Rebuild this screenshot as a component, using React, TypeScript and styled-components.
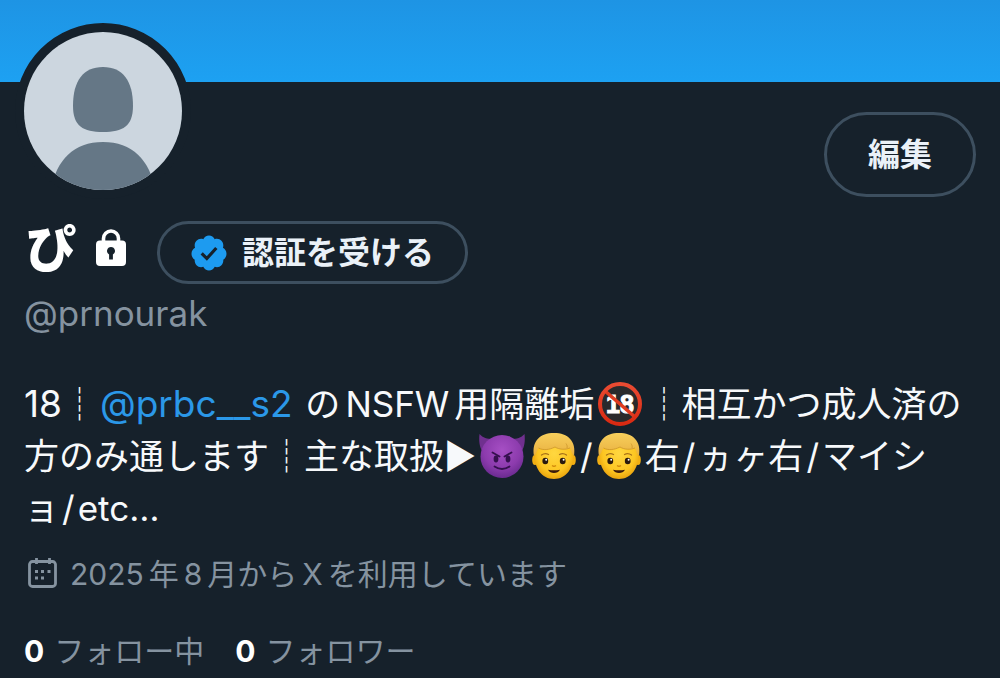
import React from "react";
import styled, { createGlobalStyle } from "styled-components";

const GlobalStyle = createGlobalStyle`
  * { box-sizing: border-box; }
  body {
    margin: 0;
    background: #16212b;
    color: #f7f9fb;
    font-family: Inter, "Noto Sans CJK JP", sans-serif;
  }
`;

const surface = "#16212b";
const muted = "#8593a0";
const accent = "#2b98e8";

const Banner = styled.div`
  height: 82px;
  background: linear-gradient(#1e94e4, #1da1f2);
`;

const Profile = styled.main`
  padding: 0 24px 6px;
`;

const TopRow = styled.div`
  display: flex;
  justify-content: space-between;
  align-items: flex-start;
`;

const Avatar = styled.div`
  width: 176px;
  height: 176px;
  margin: -59px 0 0 -9px;
  border: 9px solid ${surface};
  border-radius: 50%;
  background: ${surface};
  svg { display: block; }
`;

const PillButton = styled.button<{ $tall?: boolean }>`
  display: flex;
  align-items: center;
  gap: 15px;
  height: ${(p) => (p.$tall ? 85 : 63)}px;
  margin-top: ${(p) => (p.$tall ? 30 : 0)}px;
  padding: 0 ${(p) => (p.$tall ? 41 : 31)}px;
  border: 3px solid #3d4f5f;
  border-radius: 44px;
  background: transparent;
  color: #eaf1f8;
  font: 700 32px/40px Inter, "Noto Sans CJK JP", sans-serif;
  cursor: pointer;
`;

const NameRow = styled.div`
  display: flex;
  align-items: center;
  height: 63px;
  margin-top: 22px;
`;

const Name = styled.h1`
  margin: 0 19px 8px 2px;
  font-size: 50px;
  line-height: 54px;
  font-weight: 900;
  color: #fff;
`;

const LockIcon = styled.svg`
  margin: 0 30px 10px 0;
`;

const Handle = styled.p`
  margin: 4px 0 0;
  font-size: 35px;
  line-height: 50px;
  color: ${muted};
`;

const Bio = styled.p`
  margin: 40px 0 0;
  font-size: 35px;
  line-height: 52px;
`;

const BioLine = styled.span`
  display: flex;
  height: 52px;
  align-items: center;
  white-space: pre;
`;

const Mention = styled.a`
  margin: 0 3px;
  font-size: 37px;
  color: ${accent};
  text-decoration: none;
`;

const Age = styled.span`
  font-size: 37px;
`;

const Emoji = styled.svg`
  flex: none;
  width: 46px;
  height: 46px;
  margin: 0 3px;
`;

const Latin = styled.span`
  margin: 0 5px;
`;

const Slash = styled.span`
  margin: 0 3px;
`;

const Joined = styled.p`
  display: flex;
  align-items: center;
  gap: 7px;
  margin: 20px 0 0;
  padding-left: 4px;
  font-size: 30px;
  line-height: 40px;
  color: ${muted};
`;

const Stats = styled.div`
  display: flex;
  gap: 31px;
  margin-top: 37px;
`;

const Stat = styled.a`
  display: flex;
  gap: 10px;
  font-size: 30px;
  line-height: 40px;
  color: ${muted};
  text-decoration: none;
  b { color: #fff; }
`;

const NoMinors = () => (
  <Emoji viewBox="0 0 46 46" role="img" aria-label="18禁">
    <defs>
      <linearGradient id="ring" x1="0" y1="0" x2="0" y2="1">
        <stop offset="0" stopColor="#ea4b32" />
        <stop offset="1" stopColor="#d92a12" />
      </linearGradient>
    </defs>
    <circle cx="23" cy="23" r="19" fill="#2a2a2c" />
    <text x="23" y="32" textAnchor="middle" fontSize="25" fontWeight="700" fontFamily="Liberation Sans, sans-serif" fill="#fff" stroke="#fff" strokeWidth="1">18</text>
    <path d="M8 10 38 36" stroke="#df3b20" strokeWidth="3.6" />
    <circle cx="23" cy="23" r="20" fill="none" stroke="url(#ring)" strokeWidth="4" />
  </Emoji>
);

const Devil = () => (
  <Emoji viewBox="0 0 46 46" role="img" aria-label="悪魔">
    <defs>
      <radialGradient id="devil" cx=".5" cy=".35" r=".65">
        <stop offset="0" stopColor="#a64fc4" />
        <stop offset=".65" stopColor="#8c3bad" />
        <stop offset="1" stopColor="#6b2b90" />
      </radialGradient>
    </defs>
    <path d="M.5 1C-.5 9 1 17 5 20L14 6C8 6 4 5 .5 1ZM45.500 1C46.500 9 45 17 41 20L32 6C38 6 42 5 45.500 1Z" fill="#70308f" />
    <circle cx="23" cy="23.500" r="21.500" fill="url(#devil)" />
    <path d="M13.500 19.500 20.500 23.500M32.500 19.500 25.500 23.500" stroke="#35104e" strokeWidth="1.800" strokeLinecap="round" />
    <ellipse cx="17" cy="26" rx="2.400" ry="3.400" fill="#35104e" />
    <ellipse cx="29" cy="26" rx="2.400" ry="3.400" fill="#35104e" />
    <path d="M15.500 33.500Q23 38.500 30.500 33.500" fill="none" stroke="#35104e" strokeWidth="1.800" strokeLinecap="round" />
  </Emoji>
);

const Boy = () => (
  <Emoji viewBox="0 0 46 46" role="img" aria-label="男の子">
    <defs>
      <radialGradient id="skin" cx=".5" cy=".42" r=".6">
        <stop offset="0" stopColor="#ffd740" />
        <stop offset=".7" stopColor="#fdc622" />
        <stop offset="1" stopColor="#e8a10c" />
      </radialGradient>
      <linearGradient id="hair" x1="0" y1="0" x2="0" y2="1">
        <stop offset="0" stopColor="#f7cf5c" />
        <stop offset="1" stopColor="#e9b040" />
      </linearGradient>
    </defs>
    <ellipse cx="4" cy="27" rx="2.800" ry="5" fill="#f2af12" />
    <ellipse cx="42" cy="27" rx="2.800" ry="5" fill="#f2af12" />
    <path d="M4 20C4 8 11 2 23 2S42 8 42 20C43.500 35 35 46 23 46S2.500 35 4 20Z" fill="url(#skin)" />
    <path d="M3 23C.5 8 9 0 23 0S45.500 8 43 23C41 21 40.500 18 39 15C34 17 28 16.500 24 14C18 17 12 17.500 7.500 15C5.500 18 5 21 3 23Z" fill="url(#hair)" />
    <path d="M24 14C18 17 12 17.500 7.500 15M39 15C34 17 28 16.500 24 14M36 15C36.500 13.500 36 12 35 10.500" fill="none" stroke="#cb942c" strokeWidth=".8" />
    <path d="M10.500 22Q14 19.500 17.500 21.500M28.500 21.500Q32 19.500 35.500 22" fill="none" stroke="#a97318" strokeWidth="1.300" strokeLinecap="round" />
    <ellipse cx="14.300" cy="28" rx="2.900" ry="3.300" fill="#2b1a0d" />
    <ellipse cx="31.700" cy="28" rx="2.900" ry="3.300" fill="#2b1a0d" />
    <circle cx="15.200" cy="26.700" r="1" fill="#fff" />
    <circle cx="32.600" cy="26.700" r="1" fill="#fff" />
    <path d="M21 32.500Q23 34 25 32.500" fill="none" stroke="#d18a0c" strokeWidth="1.300" />
    <path d="M17 36.800Q23 37.800 29 36.800Q27 40 23 40T17 36.800Z" fill="#3a1a0c" />
  </Emoji>
);

const App = () => (
  <>
    <GlobalStyle />
    <Banner />
    <Profile>
      <TopRow>
        <Avatar>
          <svg width="158" height="158" viewBox="0 0 158 158" role="img" aria-label="プロフィール画像">
            <clipPath id="disc"><circle cx="79" cy="79" r="79" /></clipPath>
            <g clipPath="url(#disc)">
              <rect width="158" height="158" fill="#ccd6df" />
              <path d="M79 35C99 35 109 49 109 74C109 94 99 100 79 100S49 94 49 74C49 49 59 35 79 35Z" fill="#657786" />
              <path d="M27 158C32 128 50 110 79 110S126 128 131 158Z" fill="#657786" />
            </g>
          </svg>
        </Avatar>
        <PillButton type="button" $tall>編集</PillButton>
      </TopRow>

      <NameRow>
        <Name>ぴ</Name>
        <LockIcon width="32" height="38" viewBox="0 0 32 38" role="img" aria-label="非公開">
          <path d="M8.500 13V9.500a7.500 7.500 0 0 1 15 0V13" fill="none" stroke="#fff" strokeWidth="3.600" />
          <path fillRule="evenodd" fill="#fff" d="M5 11.500h22a4 4 0 0 1 4 4v17.500a4 4 0 0 1-4 4h-22A4 4 0 0 1 1 33v-17.500A4 4 0 0 1 5 11.500ZM16 18a4 4 0 0 0-1.900 7.500V30.500h3.800v-5a4 4 0 0 0-1.900-7.500Z" />
        </LockIcon>
        <PillButton type="button">
          <svg width="36" height="36" viewBox="1.200 1.200 21.600 21.600" aria-hidden="true">
            <path fillRule="evenodd" fill="#1d9bf0" d="M22.500 12.500c0-1.580-.875-2.950-2.148-3.600.154-.435.238-.905.238-1.400 0-2.210-1.710-3.998-3.818-3.998-.47 0-.92.084-1.336.250C14.818 2.415 13.510 1.500 12 1.500s-2.816.917-3.437 2.250c-.415-.165-.866-.250-1.336-.250-2.110 0-3.818 1.790-3.818 4 0 .494.083.964.237 1.400-1.272.650-2.147 2.018-2.147 3.600 0 1.495.782 2.798 1.942 3.486-.020.170-.032.340-.032.514 0 2.210 1.708 4 3.818 4 .470 0 .920-.086 1.335-.250.620 1.334 1.926 2.250 3.437 2.250 1.512 0 2.818-.916 3.437-2.250.415.163.865.248 1.336.248 2.110 0 3.818-1.790 3.818-4 0-.174-.012-.344-.033-.513 1.158-.687 1.943-1.990 1.943-3.484z" />
            <path d="m7.600 12.200 3.100 3.100 5.700-6.300" fill="none" stroke={surface} strokeWidth="1.900" />
          </svg>
          認証を受ける
        </PillButton>
      </NameRow>
      <Handle>@prnourak</Handle>

      <Bio>
        <BioLine><Age>18</Age>┊<Mention href="#prbc__s2">@prbc__s2</Mention> の<Latin>NSFW</Latin>用隔離垢<NoMinors />┊相互かつ成人済の</BioLine>
        <BioLine>方のみ通します┊主な取扱▶<Devil /><Boy />/<Boy />右<Slash>/</Slash>ヵヶ右<Slash>/</Slash>マイシ</BioLine>
        <BioLine>ョ<Slash>/</Slash>etc…</BioLine>
      </Bio>

      <Joined>
        <svg width="30" height="32" viewBox="0 0 30 32" aria-hidden="true">
          <rect x="1.500" y="3.500" width="26" height="25" rx="3" fill="none" stroke={muted} strokeWidth="2.800" />
          <path d="M8.500 0v6M21.500 0v6" stroke={muted} strokeWidth="2.800" />
          <path d="M7 12h3v3H7zM13 12h3v3h-3zM19.500 12h3v3h-3zM7 18.500h3v3H7zM13 18.500h3v3h-3z" fill={muted} />
        </svg>
        <span>
          <Latin>2025</Latin>年<Latin>8</Latin>月から<Latin>X</Latin>を利用しています
        </span>
      </Joined>

      <Stats>
        <Stat href="#following"><b>0</b>フォロー中</Stat>
        <Stat href="#followers"><b>0</b>フォロワー</Stat>
      </Stats>
    </Profile>
  </>
);

export default App;
